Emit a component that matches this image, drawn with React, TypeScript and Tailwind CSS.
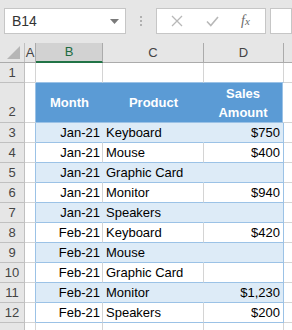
import React from 'react';

type Row = { n: number; month?: string; product?: string; amount?: string };

const rows: Row[] = [
    { n: 3, month: 'Jan-21', product: 'Keyboard', amount: '$750' },
    { n: 4, month: 'Jan-21', product: 'Mouse', amount: '$400' },
    { n: 5, month: 'Jan-21', product: 'Graphic Card' },
    { n: 6, month: 'Jan-21', product: 'Monitor', amount: '$940' },
    { n: 7, month: 'Jan-21', product: 'Speakers' },
    { n: 8, month: 'Feb-21', product: 'Keyboard', amount: '$420' },
    { n: 9, month: 'Feb-21', product: 'Mouse' },
    { n: 10, month: 'Feb-21', product: 'Graphic Card' },
    { n: 11, month: 'Feb-21', product: 'Monitor', amount: '$1,230' },
    { n: 12, month: 'Feb-21', product: 'Speakers', amount: '$200' },
];

const RowHead = ({ n, tall }: { n?: number; tall?: boolean }) => (
    <div
        className={`w-[25px] shrink-0 border-r border-b border-[#c0c0c0] bg-[#e6e6e6] text-[#444] flex justify-center ${
            tall ? 'items-end pb-[1px]' : 'items-center'
        }`}
    >
        {n}
    </div>
);

const App = () => {
    return (
        <div className="w-[292px] h-[330px] overflow-hidden bg-[#e6e6e6] font-['Liberation_Sans',sans-serif] text-[13px] text-black">
            {/* Toolbar */}
            <div className="h-[43px] flex items-start pt-[8px] pl-[4px]">
                <div className="w-[122px] h-[26px] bg-white border border-[#c6c6c6] flex items-center justify-between pl-[7px] pr-[6px] text-[14px] text-[#333]">
                    <span>B14</span>
                    <svg width="9" height="5" viewBox="0 0 9 5">
                        <path d="M0 0 L9 0 L4.5 5 Z" fill="#7a7a7a" />
                    </svg>
                </div>
                <div className="w-[30px] h-[26px] flex flex-col items-center justify-center gap-[2px]">
                    <span className="w-[2px] h-[2px] bg-[#b0b0b0]" />
                    <span className="w-[2px] h-[2px] bg-[#b0b0b0]" />
                    <span className="w-[2px] h-[2px] bg-[#b0b0b0]" />
                </div>
                <div className="w-[110px] h-[26px] bg-white border border-[#c6c6c6] flex items-center">
                    <svg width="12" height="12" viewBox="0 0 12 12" className="ml-[14px]">
                        <path d="M1 1 L11 11 M11 1 L1 11" stroke="#b8b8b8" strokeWidth="1.3" />
                    </svg>
                    <svg width="13" height="11" viewBox="0 0 13 11" className="ml-[23px]">
                        <path d="M1 5.5 L4.8 9.5 L12 1" stroke="#b8b8b8" strokeWidth="1.6" fill="none" />
                    </svg>
                    <span className="ml-[22px] font-['Liberation_Serif',serif] italic text-[14px] text-[#6a6a6a] leading-none">
                        f<span className="text-[11px]">x</span>
                    </span>
                </div>
                <div className="ml-[4px] flex-1 h-[26px] bg-white border border-[#c6c6c6]" />
            </div>

            {/* Column headers */}
            <div className="h-[20px] flex text-[#444] border-b border-[#ababab]">
                <div className="w-[25px] shrink-0 relative border-r border-[#c0c0c0]">
                    <svg width="13" height="13" viewBox="0 0 13 13" className="absolute right-[4px] bottom-[3px]">
                        <path d="M13 0 L13 13 L0 13 Z" fill="#b6b6b6" />
                    </svg>
                </div>
                <div className="w-[11px] shrink-0 flex items-center justify-center border-r border-[#ababab]">A</div>
                <div className="w-[67px] shrink-0 flex items-center justify-center bg-[#d2d2d2] text-[#1e6b41] border-b-2 border-[#217346] border-r border-r-[#ababab] -mb-px">
                    B
                </div>
                <div className="w-[101px] shrink-0 flex items-center justify-center border-r border-[#ababab]">C</div>
                <div className="w-[80px] shrink-0 flex items-center justify-center border-r border-[#ababab]">D</div>
                <div className="flex-1" />
            </div>

            {/* Grid */}
            <div className="bg-white">
                {/* Row 1 */}
                <div className="h-[20px] flex">
                    <RowHead n={1} />
                    <div className="w-[11px] shrink-0 border-r border-b border-[#d4d4d4]" />
                    <div className="w-[67px] shrink-0 border-r border-b border-[#d4d4d4] border-b-[#9bc2e6]" />
                    <div className="w-[101px] shrink-0 border-r border-b border-[#d4d4d4] border-b-[#9bc2e6]" />
                    <div className="w-[80px] shrink-0 border-r border-b border-[#d4d4d4] border-b-[#9bc2e6]" />
                    <div className="flex-1 border-b border-[#d4d4d4]" />
                </div>

                {/* Row 2: table header */}
                <div className="h-[40px] flex">
                    <RowHead n={2} tall />
                    <div className="w-[11px] shrink-0 border-r border-b border-[#d4d4d4] border-r-[#9bc2e6]" />
                    <div className="w-[247px] shrink-0 flex bg-[#5b9bd5] text-white font-bold border-r border-b border-[#9bc2e6]">
                        <div className="w-[67px] flex items-center justify-center">Month</div>
                        <div className="w-[101px] flex items-center justify-center">Product</div>
                        <div className="flex-1 flex items-center justify-center text-center leading-[19px]">
                            Sales
                            <br />
                            Amount
                        </div>
                    </div>
                    <div className="flex-1 border-b border-[#d4d4d4]" />
                </div>

                {rows.map((r) => {
                    const band = r.n % 2 === 1;
                    const cell = band
                        ? 'bg-[#ddebf7] border-r border-b border-[#ddebf7] border-b-[#9bc2e6]'
                        : 'border-r border-b border-[#d4d4d4] border-b-[#9bc2e6]';
                    return (
                        <div key={r.n} className="h-[20px] flex">
                            <RowHead n={r.n} />
                            <div className="w-[11px] shrink-0 border-r border-b border-[#d4d4d4] border-r-[#9bc2e6]" />
                            <div className={`w-[67px] shrink-0 flex items-center justify-end pr-[2px] ${cell}`}>{r.month}</div>
                            <div className={`w-[101px] shrink-0 flex items-center pl-[3px] whitespace-nowrap ${cell}`}>{r.product}</div>
                            <div className={`w-[80px] shrink-0 flex items-center justify-end pr-[3px] ${cell} border-r-[#9bc2e6]`}>
                                {r.amount}
                            </div>
                            <div className="flex-1 border-b border-[#d4d4d4]" />
                        </div>
                    );
                })}

                {/* Row 13, cut off by the window */}
                <div className="h-[20px] flex">
                    <RowHead />
                    <div className="w-[11px] shrink-0 border-r border-[#d4d4d4]" />
                    <div className="w-[67px] shrink-0 border-r border-[#d4d4d4]" />
                    <div className="w-[101px] shrink-0 border-r border-[#d4d4d4]" />
                    <div className="w-[80px] shrink-0 border-r border-[#d4d4d4]" />
                    <div className="flex-1" />
                </div>
            </div>
        </div>
    );
};

export default App;
